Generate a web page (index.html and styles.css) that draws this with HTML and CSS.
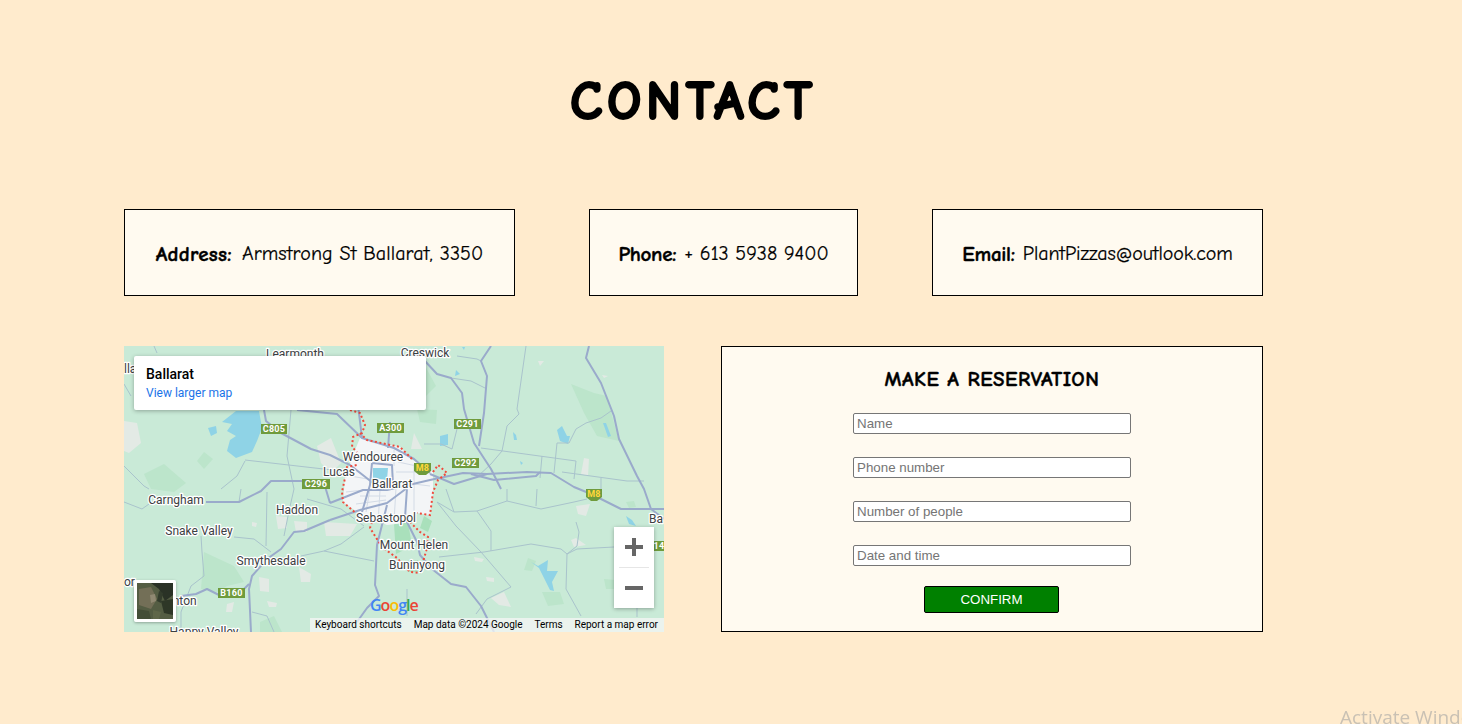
FILE: index.html
```html
<!DOCTYPE html>
<html lang="en">
<head>
    <meta charset="UTF-8">
    <meta name="viewport" content="width=device-width, initial-scale=1.0">
    <title>Contact</title>
    <link rel="stylesheet" href="styles.css">
</head>
<body>
    <main class="page">
        <h1 class="title">CONTACT</h1>

        <section class="details">
            <div class="detail detail-address"><b>Address:</b> Armstrong St Ballarat, 3350</div>
            <div class="detail detail-phone"><b>Phone:</b> + 613 5938 9400</div>
            <div class="detail detail-email"><b>Email:</b> PlantPizzas@outlook.com</div>
        </section>

        <section class="bottom">
            <div class="map">
                <svg class="map-canvas" viewBox="0 0 540 286" width="540" height="286">
                    <rect width="540" height="286" fill="#c9ead7"/>

                    <!-- forest -->
                    <g class="forest">
                        <path d="M447 38 L470 47 L483 50 L490 77 L495 95 L473 90 L460 67 Z"/>
                        <path d="M80 206 L110 220 L120 236 L103 240 L93 246 L77 243 Z"/>
                        <path d="M20 128 L40 118 L62 137 L50 146 L27 143 Z"/>
                        <path d="M73 115 L80 106 L89 113 L80 123 Z"/>
                        <path d="M418 246 L436 246 L440 258 L424 260 Z"/>
                        <path d="M480 233 L492 234 L490 243 L482 243 Z"/>
                        <path d="M502 156 L510 155 L512 161 L505 162 Z"/>
                        <path d="M293 63 L313 64 L312 78 L296 76 Z"/>
                        <path d="M266 10 L300 18 L312 40 L290 62 L272 52 Z"/>
                        <path d="M136 276 L150 270 L158 286 L136 286 Z"/>
                        <path d="M404 212 L412 215 L408 225 L400 224 Z"/>
                    </g>
                    <g class="forest-dark">
                        <path d="M270 178 L284 176 L288 200 L272 208 Z"/>
                        <path d="M300 170 L308 175 L304 186 L296 182 Z"/>
                        <path d="M280 215 L294 214 L296 226 L284 226 Z"/>
                    </g>

                    <!-- built up patches -->
                    <g class="urban">
                        <path d="M0 75 L13 77 L17 97 L5 107 L0 105 Z"/>
                        <path d="M193 100 L207 92 L217 117 L207 127 L197 117 Z"/>
                        <path d="M152 170 L163 171 L163 182 L154 183 Z"/>
                        <path d="M170 175 L183 176 L183 186 L172 186 Z"/>
                        <path d="M200 176 L233 178 L226 190 L202 190 Z"/>
                        <path d="M135 231 L145 233 L145 246 L136 245 Z"/>
                        <path d="M175 221 L187 228 L186 236 L177 236 Z"/>
                        <path d="M103 258 L110 256 L108 266 L102 266 Z"/>
                        <path d="M143 255 L153 257 L152 261 L145 261 Z"/>
                        <path d="M128 176 L133 177 L132 181 L128 180 Z"/>
                        <path d="M367 252 L380 246 L387 261 L375 259 Z"/>
                        <path d="M362 231 L370 232 L370 236 L363 235 Z"/>
                        <path d="M350 211 L360 213 L358 216 L351 215 Z"/>
                        <path d="M447 194 L452 192 L462 199 L450 201 Z"/>
                        <path d="M452 160 L466 158 L462 170 L454 168 Z"/>
                        <path d="M457 128 L460 112 L465 113 L464 130 Z"/>
                        <path d="M290 87 L298 103 L287 103 Z"/>
                        <path d="M414 15 L420 15 L416 20 Z"/>
                        <path d="M478 29 L484 30 L480 32 Z"/>
                    </g>

                    <!-- ballarat -->
                    <path class="city" d="M219 156 L221 132 L229 109 L236 92 L256 97 L276 101 L289 114 L309 126 L309 146 L306 169 L293 167 L289 176 L263 179 L233 166 Z"/>
                    <g class="street">
                        <path d="M226 130 L250 134 M222 146 L240 144 M236 150 L262 150 M232 158 L262 154 M246 143 L242 166 M256 144 L254 178 M272 142 L270 176 M270 104 L270 120 M272 126 L300 126 M274 116 L302 122 M274 136 L306 140 M290 118 L290 166"/>
                    </g>

                    <!-- water -->
                    <g class="water">
                        <path d="M112 65 L135 65 L138 82 L133 95 L128 106 L112 112 L103 105 L106 94 L112 90 L103 85 L108 78 L98 76 Z"/>
                        <path d="M84 82 L92 80 L93 87 L87 90 Z"/>
                        <path d="M249 122 L264 122 L263 134 L249 132 Z"/>
                        <path d="M316 90 L324 88 L324 99 L316 100 Z"/>
                        <path d="M433 84 L438 80 L443 90 L446 90 L444 98 L436 95 Z"/>
                        <path d="M479 77 L482 77 L487 90 L484 91 Z"/>
                        <path d="M407 216 L414 220 L424 214 L423 225 L434 225 L428 236 L430 245 L426 244 L420 232 L415 222 Z"/>
                        <path d="M502 170 L508 174 L512 180 L505 178 Z"/>
                        <path d="M389 86 L392 89 L393 94 L390 94 Z"/>
                        <path d="M396 115 L399 117 L397 119 Z"/>
                        <path d="M338 1 L341 1 L340 4 Z"/>
                        <path d="M332 24 L336 28 L331 30 Z"/>
                    </g>

                    <!-- minor roads and shire lines -->
                    <g class="minor">
                        <path d="M402 0 L393 63 L395 68 L383 80 L378 105 L367 118 L352 132"/>
                        <path d="M452 115 L357 102 M452 115 L450 133 M418 110 L416 132"/>
                        <path d="M433 97 L430 127 M433 97 L445 97 L452 83 L462 77 L477 72 L487 65"/>
                        <path d="M438 126 L503 135 L520 135 M477 132 L477 143"/>
                        <path d="M327 32 L347 35 L363 43 M333 10 L353 13 L357 15"/>
                        <path d="M300 98 L317 98 L328 103 L333 83"/>
                        <path d="M121 114 L217 125"/>
                        <path d="M167 64 L163 110 L170 143 L165 165 L160 190"/>
                        <path d="M30 0 L33 7 M0 38 L7 50 M0 120 L20 140 L25 143"/>
                        <path d="M121 115 L113 130 L97 143"/>
                        <path d="M0 156 L18 163 L25 158"/>
                        <path d="M117 143 L115 156 M143 146 L142 200"/>
                        <path d="M110 191 L130 193 L147 206"/>
                        <path d="M77 190 L78 206 L80 230 L67 240 L57 266 L57 286"/>
                        <path d="M177 210 L200 205 L217 198 L240 181 M200 205 L250 215"/>
                        <path d="M128 266 L143 270 L150 286"/>
                        <path d="M183 153 L217 163 L240 180"/>
                        <path d="M313 156 L332 180 L357 206 L387 241 L363 253 L352 268"/>
                        <path d="M315 211 L360 206 L407 198 L437 203 L443 208 L453 203 L490 201"/>
                        <path d="M383 155 L353 165 L330 166 L313 156 M353 165 L367 185 L367 205"/>
                        <path d="M383 155 L417 163 L450 156 L463 153"/>
                        <path d="M322 143 L330 166 M383 155 L383 143 M413 143 L412 160"/>
                        <path d="M452 176 L455 186 L453 200 L443 208 L442 243 L457 270"/>
                        <path d="M283 243 L283 270 M513 253 L513 271"/>
                    </g>

                    <!-- main roads -->
                    <g class="road">
                        <path d="M82 156 L115 156 L137 145 L147 135 L177 135 L200 137 L206 157 M206 157 L239 144 L263 144 L306 134 L339 127 L363 128 L403 126 L427 127 L450 141 L467 148 L497 163 L540 163"/>
                        <path d="M306 128 L330 138 L363 128"/>
                        <path d="M206 174 L236 164 L263 157 L283 142"/>
                        <path d="M206 174 L180 185 L170 186 L157 203 L143 213 L128 230 L125 243 L127 286"/>
                        <path d="M125 238 L117 246 L95 249 L83 243 L72 248 L57 250"/>
                        <path d="M140 64 L142 75 L157 87 L187 103 L206 109 L226 119 L249 137"/>
                        <path d="M173 64 L213 68 L238 92 L270 102 L290 113 L306 127"/>
                        <path d="M234 59 L238 92"/>
                        <path d="M266 76 L264 102"/>
                        <path d="M248 117 L246 139 L238 166 M248 117 L268 119 L269 139"/>
                        <path d="M283 142 L281 172 L293 196 L296 209 L308 223 L327 238 L342 241 L357 260 L370 286"/>
                        <path d="M263 159 L253 199 L251 239 L255 250 L243 262 L233 276"/>
                        <path d="M300 14 L313 28 L327 32 L338 47 L340 63 L350 97 L367 123 L377 143"/>
                        <path d="M367 0 L357 15 L363 30 L360 67 L355 100"/>
                        <path d="M465 0 L462 12 L477 37 L490 70 L495 93 L513 130 L520 143 L527 163 L540 173"/>
                        <path d="M347 128 L370 134 L412 130 L416 126"/>
                    </g>

                    <!-- city boundary -->
                    <path class="boundary" d="M226 64 L236 67 L241 79 L238 87 L229 91 L228 101 L233 106 M236 87 L243 94 L276 101 L289 114 M309 126 L314 119 L323 127 L314 134 L309 146 L306 169 L293 167 M286 176 L296 186 L304 191 L303 202 L299 216 L296 227 L286 226 L273 212 L258 201 L246 182 L248 176 L234 169 L219 156 L218 146 L221 132 L223 121 L233 119"/>

                    <!-- road shields -->
                    <g class="shield">
                        <rect x="137" y="78" width="26" height="10"/><text x="150" y="86.4">C805</text>
                        <rect x="253" y="77" width="27" height="10"/><text x="266.5" y="85.4">A300</text>
                        <rect x="330" y="73" width="27" height="10"/><text x="343.5" y="81.4">C291</text>
                        <rect x="328" y="112" width="27" height="10"/><text x="341.5" y="120.4">C292</text>
                        <rect x="178" y="133" width="28" height="10"/><text x="192" y="141.4">C296</text>
                        <rect x="94" y="242" width="27" height="10"/><text x="107.5" y="250.4">B160</text>
                        <rect x="530" y="195" width="10" height="10"/><text x="535" y="203.4">14</text>
                    </g>
                    <g class="shield shield-m">
                        <path d="M290 117 H307 V125 L302 129 H295 L290 125 Z"/><text x="298.5" y="125.4">M8</text>
                        <path d="M462 143 H478 V151 L473 155 H467 L462 151 Z"/><text x="470" y="151.4">M8</text>
                    </g>

                    <!-- place names -->
                    <g class="place">
                        <text x="171" y="12">Learmonth</text>
                        <text x="301" y="11">Creswick</text>
                        <text x="249" y="115">Wendouree</text>
                        <text x="215" y="130">Lucas</text>
                        <text x="268" y="142">Ballarat</text>
                        <text x="52" y="158">Carngham</text>
                        <text x="173" y="168">Haddon</text>
                        <text x="75" y="189">Snake Valley</text>
                        <text x="262" y="176">Sebastopol</text>
                        <text x="147" y="219">Smythesdale</text>
                        <text x="290" y="203">Mount Helen</text>
                        <text x="293" y="223">Buninyong</text>
                        <text x="56" y="259">Linton</text>
                        <text class="place-start" x="0" y="240">or</text>
                        <text x="80" y="290">Happy Valley</text>
                        <text class="place-start" x="525" y="177">Ba</text>
                        <text class="place-start" x="0" y="27">lla</text>
                    </g>

                    <!-- logo -->
                    <text class="logo" x="246" y="265"><tspan fill="#4285f4">G</tspan><tspan fill="#ea4335">o</tspan><tspan fill="#fbbc05">o</tspan><tspan fill="#4285f4">g</tspan><tspan fill="#34a853">l</tspan><tspan fill="#ea4335">e</tspan></text>
                </svg>

                <div class="map-card">
                    <div class="map-card-name">Ballarat</div>
                    <a class="map-card-link" href="#">View larger map</a>
                </div>

                <div class="map-thumb">
                    <svg viewBox="0 0 36 36" width="36" height="36">
                        <rect width="36" height="36" fill="#545d43"/>
                        <path d="M14 0 L36 0 L36 12 L28 18 L22 6 Z" fill="#2a3226"/>
                        <path d="M2 6 L14 4 L20 16 L14 26 L2 22 Z" fill="#736f57"/>
                        <path d="M24 18 L36 16 L36 32 L27 30 Z" fill="#2e3727"/>
                        <path d="M0 26 L12 28 L14 36 L0 36 Z" fill="#434e37"/>
                        <path d="M13 12 L18 11 L19 18 L14 20 Z" fill="#908972"/>
                        <path d="M16 27 L24 29 L22 36 L16 36 Z" fill="#5f6749"/>
                        <path d="M22 8 L26 10 L24 20 L20 18 Z" fill="#333c2c"/>
                    </svg>
                </div>

                <div class="map-zoom">
                    <button class="zoom-btn" type="button" aria-label="Zoom in">
                        <svg viewBox="0 0 18 18" width="18" height="18"><path d="M0 7 H7 V0 H11 V7 H18 V11 H11 V18 H7 V11 H0 Z"/></svg>
                    </button>
                    <div class="zoom-line"></div>
                    <button class="zoom-btn" type="button" aria-label="Zoom out">
                        <svg viewBox="0 0 18 18" width="18" height="18"><path d="M0 7 H18 V11 H0 Z"/></svg>
                    </button>
                </div>

                <div class="map-credits">
                    <span>Keyboard shortcuts</span>
                    <span>Map data ©2024 Google</span>
                    <span>Terms</span>
                    <span>Report a map error</span>
                </div>
            </div>

            <form class="booking">
                <h2 class="booking-title">MAKE A RESERVATION</h2>
                <input class="field" type="text" placeholder="Name">
                <input class="field" type="text" placeholder="Phone number">
                <input class="field" type="text" placeholder="Number of people">
                <input class="field" type="text" placeholder="Date and time">
                <button class="confirm" type="button">CONFIRM</button>
            </form>
        </section>
    </main>

    <div class="watermark">Activate Windows</div>
</body>
</html>
```

FILE: styles.css
```css
html, body {
    height: 100%;
}

body {
    margin: 0;
    background-color: #ffebcd;
    font-family: "Comic Sans MS", "Comic Neue", "Open Sans", sans-serif;
    color: #000;
    overflow: hidden;
}

.page {
    width: 1139px;
    margin-left: 124px;
}

.title {
    margin: 0;
    padding-top: 68px;
    height: 209px;
    box-sizing: border-box;
    text-align: center;
    font-size: 54px;
    line-height: 68px;
    font-weight: 700;
    letter-spacing: 4.5px;
    -webkit-text-stroke: 2px #000;
}

.details {
    display: flex;
    justify-content: space-between;
}

.detail {
    height: 87px;
    box-sizing: border-box;
    padding-top: 2px;
    border: 1px solid #000;
    background-color: #fffaf0;
    display: flex;
    align-items: center;
    justify-content: center;
    gap: 8px;
    font-size: 20px;
    -webkit-text-stroke: 0.2px #000;
}

.detail b {
    font-size: 21px;
    letter-spacing: -0.3px;
    -webkit-text-stroke: 0.4px #000;
}

.detail-address {
    width: 391px;
    gap: 10px;
    letter-spacing: 0.1px;
}

.detail-address b {
    letter-spacing: 0.3px;
}

.detail-phone {
    width: 269px;
}

.detail-email {
    width: 331px;
    letter-spacing: -0.1px;
}

.bottom {
    display: flex;
    justify-content: space-between;
    margin-top: 50px;
}

/* map */
.map {
    position: relative;
    width: 540px;
    height: 286px;
    overflow: hidden;
}

.map-canvas {
    display: block;
}

.forest {
    fill: #bce5cb;
}

.forest-dark {
    fill: #a9e0bb;
}

.urban {
    fill: #e3eae5;
}

.city {
    fill: #f3f5f7;
}

.street {
    fill: none;
    stroke: #d3dbe6;
    stroke-width: 1;
}

.water {
    fill: #8fd3e6;
}

.minor {
    fill: none;
    stroke: #a9c3cc;
    stroke-width: 1;
}

.road {
    fill: none;
    stroke: #9aaacb;
    stroke-width: 2;
    stroke-linejoin: round;
}

.boundary {
    fill: none;
    stroke: #f04a3c;
    stroke-width: 2;
    stroke-dasharray: 2 2.5;
}

.shield rect {
    fill: #6f9b3c;
}

.shield text {
    fill: #fff;
    font-family: Roboto, sans-serif;
    font-size: 9px;
    font-weight: 700;
    text-anchor: middle;
    letter-spacing: 0.3px;
}

.shield-m path {
    fill: #6f9b3c;
}

.shield-m text {
    fill: #ffd83a;
}

.place text {
    font-family: Roboto, sans-serif;
    font-size: 12px;
    fill: #3c4043;
    stroke: #fff;
    stroke-width: 2.5px;
    stroke-linejoin: round;
    paint-order: stroke;
    text-anchor: middle;
}

.place .place-start {
    text-anchor: start;
}

.logo {
    font-family: "Open Sans", sans-serif;
    font-size: 16px;
    font-weight: 600;
    letter-spacing: -1px;
}

.map-card {
    position: absolute;
    left: 10px;
    top: 10px;
    width: 292px;
    height: 54px;
    box-sizing: border-box;
    padding: 9px 12px;
    background-color: #fff;
    border-radius: 2px;
    box-shadow: 0 1px 4px rgba(0, 0, 0, 0.3);
    font-family: Roboto, sans-serif;
}

.map-card-name {
    font-size: 14px;
    line-height: 18px;
    font-weight: 500;
    color: #000;
}

.map-card-link {
    display: block;
    font-size: 12px;
    line-height: 20px;
    color: #1a73e8;
    text-decoration: none;
}

.map-thumb {
    position: absolute;
    left: 10px;
    top: 234px;
    width: 36px;
    height: 36px;
    border: 3px solid #fff;
    border-radius: 2px;
    box-shadow: 0 1px 3px rgba(0, 0, 0, 0.3);
}

.map-thumb svg {
    display: block;
}

.map-zoom {
    position: absolute;
    left: 490px;
    top: 181px;
    width: 40px;
    height: 81px;
    background-color: #fff;
    box-shadow: 0 1px 4px rgba(0, 0, 0, 0.3);
    display: flex;
    flex-direction: column;
    align-items: center;
}

.zoom-btn {
    width: 40px;
    height: 40px;
    padding: 0;
    border: none;
    background: none;
    display: flex;
    align-items: center;
    justify-content: center;
}

.zoom-btn svg {
    fill: #666;
}

.zoom-line {
    width: 30px;
    height: 1px;
    background-color: #e6e6e6;
}

.map-credits {
    position: absolute;
    right: 0;
    bottom: 0;
    width: 354px;
    height: 14px;
    display: flex;
    justify-content: space-between;
    padding: 0 6px 0 5px;
    box-sizing: border-box;
    background-color: rgba(245, 245, 245, 0.75);
    font-family: Roboto, sans-serif;
    font-size: 10px;
    line-height: 14px;
    color: #000;
}

/* reservation form */
.booking {
    width: 542px;
    height: 286px;
    box-sizing: border-box;
    border: 1px solid #000;
    background-color: #fffaf0;
    display: flex;
    flex-direction: column;
    align-items: center;
}

.booking-title {
    margin: 21px 0 22px;
    font-size: 21px;
    line-height: 23px;
    font-weight: 700;
    letter-spacing: 0.5px;
    -webkit-text-stroke: 0.4px #000;
}

.field {
    width: 278px;
    height: 21px;
    box-sizing: border-box;
    margin-bottom: 23px;
    padding: 1px 3px;
    border: 1px solid #767676;
    border-radius: 2px;
    background-color: #fff;
    font-family: "Liberation Sans", Arial, sans-serif;
    font-size: 13.33px;
}

.confirm {
    width: 135px;
    height: 27px;
    margin-top: -3px;
    margin-right: 1px;
    padding: 0;
    border: 1px solid #000;
    border-radius: 2px;
    background-color: #008000;
    color: #fff;
    font-family: "Liberation Sans", Arial, sans-serif;
    font-size: 13.33px;
}

.watermark {
    position: fixed;
    left: 1340px;
    top: 705px;
    white-space: nowrap;
    font-family: "Open Sans", sans-serif;
    font-size: 19px;
    line-height: 24px;
    color: #c9c1b4;
}
```
